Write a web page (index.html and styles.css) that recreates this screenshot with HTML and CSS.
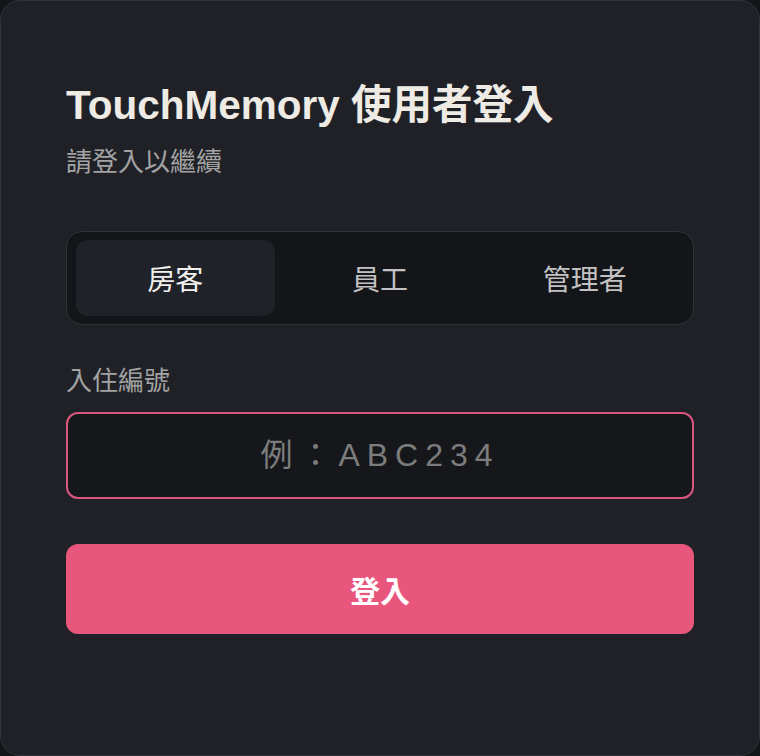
FILE: index.html
```html
<!DOCTYPE html>
<html lang="zh-Hant">
<head>
<meta charset="utf-8">
<title>TouchMemory 使用者登入</title>
<link rel="stylesheet" href="styles.css">
</head>
<body>
<main class="card">
  <h1 class="title">TouchMemory 使用者登入</h1>
  <p class="subtitle">請登入以繼續</p>
  <div class="tabs">
    <button class="tab active">房客</button>
    <button class="tab">員工</button>
    <button class="tab">管理者</button>
  </div>
  <label class="label" for="code">入住編號</label>
  <input id="code" class="input" type="text" placeholder="例：ABC234">
  <button class="submit">登入</button>
</main>
</body>
</html>
```
FILE: styles.css
```css
html, body {
  margin: 0;
  padding: 0;
  background: #141518;
  width: 760px;
  height: 756px;
  overflow: hidden;
}
body {
  font-family: "Liberation Sans", "Noto Sans CJK TC", sans-serif;
}
.card {
  box-sizing: border-box;
  width: 760px;
  height: 756px;
  background: #1f2127;
  border: 1px solid #30333a;
  border-radius: 20px;
  padding: 80px 65px 0 65px;
  display: flex;
  flex-direction: column;
}
.title {
  margin: 0;
  font-size: 40.5px;
  line-height: 48px;
  font-weight: 700;
  color: #eeebe4;
}
.subtitle {
  margin: 16px 0 0 0;
  font-size: 26px;
  line-height: 34px;
  color: #a3a3a3;
}
.tabs {
  margin-top: 52px;
  box-sizing: border-box;
  height: 94px;
  background: #141519;
  border: 1px solid #2f3238;
  border-radius: 16px;
  padding: 8px 9px;
  display: grid;
  grid-template-columns: 1fr 1fr 1fr;
  gap: 6px;
}
.tab {
  border: none;
  background: transparent;
  font-family: "Liberation Sans", "Noto Sans CJK TC", sans-serif;
  font-size: 28px;
  color: #c2c2c2;
  border-radius: 12px;
  padding: 0;
  cursor: pointer;
}
.tab.active {
  background: #1f2228;
  color: #f2f0ec;
}
.label {
  margin-top: 39px;
  font-size: 26px;
  line-height: 34px;
  color: #a3a3a3;
}
.input {
  margin-top: 14px;
  box-sizing: border-box;
  height: 87px;
  width: 100%;
  background: #16171b;
  border: 2px solid #d9567d;
  border-radius: 12px;
  text-align: center;
  font-family: "Liberation Sans", "Noto Sans CJK TC", sans-serif;
  font-size: 32px;
  letter-spacing: 7px;
  color: #e0e0e0;
  outline: none;
}
.input::placeholder {
  color: #7c7c7c;
}
.submit {
  margin-top: 45px;
  height: 90px;
  width: 100%;
  border: none;
  border-radius: 12px;
  background: #e8567e;
  color: #ffffff;
  font-family: "Liberation Sans", "Noto Sans CJK TC", sans-serif;
  font-size: 30px;
  font-weight: 700;
  cursor: pointer;
}
```
